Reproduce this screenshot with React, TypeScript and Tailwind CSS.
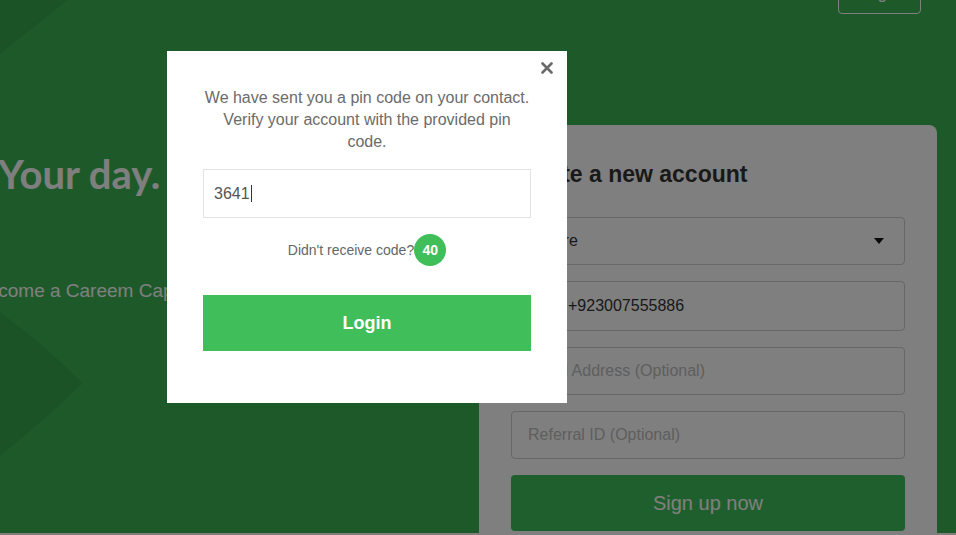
const font = { fontFamily: "'Liberation Sans', Arial, sans-serif" };
const display = { fontFamily: "Lato, 'Liberation Sans', sans-serif" };

function Backdrop() {
	return (
		<svg className="absolute inset-0 h-full w-full" viewBox="0 0 956 533" preserveAspectRatio="none">
			<path d="M0 0 L68 0 L0 54 Z" fill="#000" fillOpacity="0.07" />
			<path d="M0 312 Q45 345 83 383 Q45 420 0 456 Z" fill="#000" fillOpacity="0.07" />
		</svg>
	);
}

function SignupCard() {
	return (
		<div className="w-[458px] shrink-0 rounded-t-lg bg-white px-8 pt-[34px] pb-8">
			<h2 className="text-[23px] font-bold leading-[30px] text-[#333]">Create a new account</h2>
			<div className="mt-7 flex flex-col gap-4">
				<div className="flex h-12 items-center justify-between rounded border border-[#cfcfcf] px-4 text-base text-[#333]">
					<span>Lahore</span>
					<svg width="10" height="6" viewBox="0 0 10 6" className="mr-1">
						<path d="M0 0 L10 0 L5 6 Z" fill="#111" />
					</svg>
				</div>
				<div className="flex h-[50px] items-center rounded border border-[#cfcfcf] pl-14 text-base text-[#333]">
					+923007555886
				</div>
				<div className="flex h-12 items-center rounded border border-[#cfcfcf] px-4 text-base text-[#bdbdbd]">
					Email Address (Optional)
				</div>
				<div className="flex h-12 items-center rounded border border-[#cfcfcf] px-4 text-base text-[#bdbdbd]">
					Referral ID (Optional)
				</div>
				<button className="flex h-14 items-center justify-center rounded bg-[#3fbe5a] text-[20px] text-white">
					Sign up now
				</button>
			</div>
		</div>
	);
}

function PinModal() {
	return (
		<div className="ml-[167px] mt-[51px] w-[400px] bg-white px-9 pt-[11px] pb-[52px]">
			<div className="flex justify-end">
				<svg width="12" height="12" viewBox="0 0 12 12" className="mr-[-22px]">
					<path d="M1.5 1.5 L10.5 10.5 M10.5 1.5 L1.5 10.5" stroke="#6b6b6b" strokeWidth="2.6" strokeLinecap="round" />
				</svg>
			</div>
			<p className="mt-[13px] text-center text-base leading-[22px] text-[#6b6b6b]">
				We have sent you a pin code on your contact. Verify your account with the provided pin code.
			</p>
			<div className="mt-[16px] flex h-[49px] items-center border border-[#e3e3e3] px-[10px] text-base text-[#555]">
				3641<span className="ml-px inline-block h-[17px] w-px bg-[#333]" />
			</div>
			<div className="mt-4 flex items-center justify-center text-sm text-[#666]">
				<span>Didn't receive code?</span>
				<span className="flex h-8 w-8 items-center justify-center rounded-full bg-[#3fbe5a] text-sm font-bold text-white">
					40
				</span>
			</div>
			<button className="mt-[29px] flex h-14 w-full items-center justify-center bg-[#3fbe5a] text-lg font-bold text-white">
				Login
			</button>
		</div>
	);
}

export default function App() {
	return (
		<div className="relative h-[535px] w-full overflow-hidden bg-white" style={font}>
			<section className="relative h-[533px] overflow-hidden bg-[#3cb452]">
				<Backdrop />
				<div className="relative -mt-[26px]">
					<header className="flex h-10 justify-end pr-[35px]">
						<button className="flex w-[83px] items-center justify-center rounded border border-white text-base text-white">
							Login
						</button>
					</header>
					<div className="flex">
						<div className="w-[479px] shrink-0 pt-[136px]">
							<h1 className="-ml-[2px] text-[40px] font-bold leading-[48px] text-white" style={display}>
								Your day.
							</h1>
							<p className="-ml-[25px] mt-[81px] text-[19px] leading-6 text-white">Become a Careem Captain</p>
						</div>
						<div className="mt-[111px]">
							<SignupCard />
						</div>
					</div>
				</div>
			</section>
			<div className="absolute inset-0 bg-black/50">
				<PinModal />
			</div>
		</div>
	);
}
